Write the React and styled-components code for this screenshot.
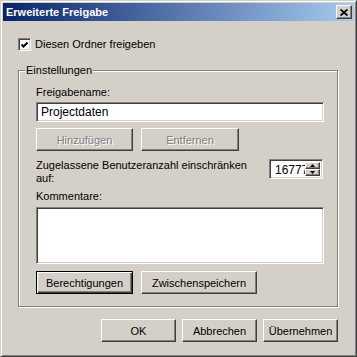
import styled, { createGlobalStyle } from 'styled-components'

const Global = createGlobalStyle`
  html, body { margin: 0; padding: 0; background: #d4d0c8; }
  * { box-sizing: border-box; }
`;

const Window = styled.div`
  width: 357px;
  height: 357px;
  background: #d4d0c8;
  border: 1px solid;
  border-color: #d4d0c8 #404040 #404040 #d4d0c8;
  box-shadow: inset 1px 1px #fff, inset -1px -1px #808080;
  padding: 2px;
  display: flex;
  flex-direction: column;
  font-family: "Liberation Sans", Arial, sans-serif;
  font-size: 11px;
  color: #000;
`;

const TitleBar = styled.div`
  height: 18px;
  flex: none;
  display: flex;
  align-items: center;
  padding-left: 3px;
  background: linear-gradient(to right, #0a246a, #a6caf0);
  color: #fff;
  font-weight: bold;
`;

const CloseButton = styled.div`
  margin-left: auto;
  margin-right: 2px;
  width: 16px;
  height: 14px;
  background: #d4d0c8;
  border: 1px solid;
  border-color: #fff #404040 #404040 #fff;
  box-shadow: inset -1px -1px #808080;
  display: flex;
  align-items: center;
  justify-content: center;
`;

const Body = styled.div`
  padding: 17px 16px 0 15px;
  display: flex;
  flex-direction: column;
`;

const CheckRow = styled.label`
  display: flex;
  align-items: center;
  gap: 4px;
  height: 13px;
  line-height: 13px;
`;

const CheckBox = styled.span`
  width: 13px;
  height: 13px;
  background: #fff;
  border: 1px solid;
  border-color: #808080 #fff #fff #808080;
  box-shadow: inset 1px 1px #404040, inset -1px -1px #d4d0c8;
  display: flex;
  align-items: center;
  justify-content: center;
`;

const GroupBox = styled.div`
  position: relative;
  margin-top: 19px;
  width: 320px;
  height: 237px;
  border: 1px solid #808080;
  box-shadow: inset 1px 1px #fff, 1px 1px #fff;
  padding: 15px 13px 0 17px;
  display: flex;
  flex-direction: column;
`;

const GroupCaption = styled.span`
  position: absolute;
  left: 6px;
  top: -7px;
  padding: 0 1px;
  line-height: 13px;
  background: #d4d0c8;
`;

const Label = styled.div`
  line-height: 13px;
  margin-top: ${p => p.$mt || 0}px;
`;

const Sunken = styled.div`
  background: #fff;
  border: 1px solid;
  border-color: #808080 #fff #fff #808080;
  box-shadow: inset 1px 1px #404040, inset -1px -1px #d4d0c8;
`;

const TextInput = styled(Sunken)`
  margin-top: 3px;
  height: 20px;
  padding: 0 4px;
  line-height: 18px;
  font-size: 12px;
`;

const TextArea = styled(Sunken)`
  margin-top: 4px;
  height: 57px;
`;

const ButtonRow = styled.div`
  display: flex;
  gap: ${p => p.$gap || 8}px;
  margin-top: ${p => p.$mt || 0}px;
  justify-content: ${p => p.$end ? 'flex-end' : 'flex-start'};
`;

const Button = styled.div`
  width: ${p => p.$w || 75}px;
  height: 23px;
  display: flex;
  align-items: center;
  justify-content: center;
  background: #d4d0c8;
  border: 1px solid;
  border-color: ${p => p.$default ? '#000' : '#fff #404040 #404040 #fff'};
  box-shadow: ${p => p.$default
    ? 'inset 1px 1px #fff, inset -1px -1px #404040, inset -2px -2px #808080'
    : 'inset -1px -1px #808080'};
  color: ${p => p.$disabled ? '#808080' : '#000'};
  text-shadow: ${p => p.$disabled ? '1px 1px #fff' : 'none'};
`;

const LimitRow = styled.div`
  display: flex;
  justify-content: space-between;
  align-items: flex-start;
  margin-top: 8px;
`;

const LimitText = styled.div`
  width: 215px;
  line-height: 13px;
`;

const Spinner = styled(Sunken)`
  width: 54px;
  height: 20px;
  display: flex;
  padding: 2px;
  margin-right: 1px;
`;

const SpinValue = styled.div`
  flex: 1;
  overflow: hidden;
  white-space: nowrap;
  padding-left: 3px;
  line-height: 16px;
  font-size: 12px;
`;

const SpinButtons = styled.div`
  width: 15px;
  display: flex;
  flex-direction: column;
`;

const SpinButton = styled.div`
  flex: 1;
  background: #d4d0c8;
  border: 1px solid;
  border-color: #fff #404040 #404040 #fff;
  box-shadow: inset -1px -1px #808080;
  display: flex;
  align-items: center;
  justify-content: center;
`;

const Arrow = ({ down }) => (
  <svg width="5" height="3" viewBox="0 0 5 3">
    <path d={down ? 'M0 0h5L2.5 3z' : 'M0 3h5L2.5 0z'} fill="#000" />
  </svg>
);

const App = () => {
  return <>
    <Global />
    <Window>
      <TitleBar>
        Erweiterte Freigabe
        <CloseButton>
          <svg width="8" height="7" viewBox="0 0 8 7">
            <path d="M0.5 0.5 L7.5 6.5 M7.5 0.5 L0.5 6.5" stroke="#000" strokeWidth="1.8" />
          </svg>
        </CloseButton>
      </TitleBar>
      <Body>
        <CheckRow>
          <CheckBox>
            <svg width="7" height="7" viewBox="0 0 7 7">
              <path d="M0 2v3l2 2l5-5V-1z" fill="none" />
              <path d="M0.5 3.5 L2.5 5.5 L6.5 1.5" stroke="#000" strokeWidth="2" fill="none" />
            </svg>
          </CheckBox>
          Diesen Ordner freigeben
        </CheckRow>
        <GroupBox>
          <GroupCaption>Einstellungen</GroupCaption>
          <Label>Freigabename:</Label>
          <TextInput>Projectdaten</TextInput>
          <ButtonRow $mt={6}>
            <Button $w={97} $disabled>Hinzufügen</Button>
            <Button $w={98} $disabled>Entfernen</Button>
          </ButtonRow>
          <LimitRow>
            <LimitText>Zugelassene Benutzeranzahl einschränken auf:</LimitText>
            <Spinner>
              <SpinValue>16777216</SpinValue>
              <SpinButtons>
                <SpinButton><Arrow /></SpinButton>
                <SpinButton><Arrow down /></SpinButton>
              </SpinButtons>
            </Spinner>
          </LimitRow>
          <Label $mt={5}>Kommentare:</Label>
          <TextArea />
          <ButtonRow $mt={7}>
            <Button $w={97} $default>Berechtigungen</Button>
            <Button $w={116}>Zwischenspeichern</Button>
          </ButtonRow>
        </GroupBox>
        <ButtonRow $mt={12} $gap={6} $end>
          <Button>OK</Button>
          <Button>Abbrechen</Button>
          <Button>Übernehmen</Button>
        </ButtonRow>
      </Body>
    </Window>
  </>
};

export default App;
